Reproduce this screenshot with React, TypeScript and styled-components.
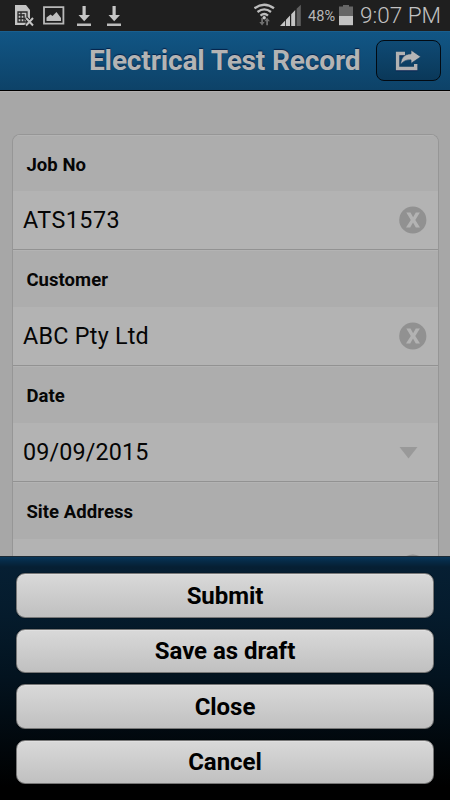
import React from 'react';
import styled, { createGlobalStyle } from 'styled-components';

const GlobalStyle = createGlobalStyle`
  * { box-sizing: border-box; }
  html, body { margin: 0; padding: 0; }
  body { font-family: Roboto, "Liberation Sans", sans-serif; background: #a7a7a7; }
  svg { display: block; flex: none; }
`;

const Screen = styled.div`
  width: 450px;
  height: 800px;
  overflow: hidden;
  display: flex;
  flex-direction: column;
  background: #a7a7a7;
`;

const StatusBar = styled.div`
  height: 31px;
  flex: none;
  display: flex;
  align-items: flex-start;
  justify-content: space-between;
  padding: 0 9px 0 14px;
  background: #1f1f1f;
`;

const StatusGroup = styled.div`
  display: flex;
  height: 31px;
`;

const Battery = styled.span`
  width: 30px;
  margin-left: 6px;
  margin-right: 1px;
  font-size: 14.6px;
  line-height: 31px;
  padding-top: 1px;
  color: #b8b8b8;
  white-space: nowrap;
`;

const Clock = styled.span`
  width: 81px;
  margin-left: 7px;
  font-size: 22.5px;
  font-weight: 300;
  line-height: 31px;
  color: #c2c2c2;
  white-space: nowrap;
`;

const Header = styled.header`
  height: 60px;
  flex: none;
  display: flex;
  align-items: center;
  justify-content: flex-end;
  padding-right: 9px;
  border-bottom: 1px solid #000;
  background: linear-gradient(#115685, #0d4268);
  box-shadow: inset 0 1px #1a5f8e, 0 1px #b2b0b0;
`;

const Title = styled.h1`
  margin: 0 15px 0 0;
  width: 272px;
  font-size: 28px;
  font-weight: 700;
  line-height: 34px;
  letter-spacing: -0.14px;
  white-space: nowrap;
  color: #b4b4b4;
  text-shadow: 0 -1px 1px #06224a;
`;

const ShareButton = styled.button`
  width: 65px;
  height: 41px;
  padding: 0;
  display: grid;
  place-items: center;
  border: 1px solid #020a12;
  border-radius: 8px;
  background: linear-gradient(#0f4a74, #0a3859);
`;

const Form = styled.main`
  flex: 1;
  min-height: 0;
  overflow: hidden;
  padding: 43px 12px 0;
`;

const Card = styled.div`
  width: 427px;
  border: 1px solid #969696;
  border-bottom: 0;
  border-radius: 8px 8px 0 0;
  overflow: hidden;
  background: #aeaeae;
`;

const Label = styled.label<{ $first: boolean }>`
  display: block;
  height: ${(p) => (p.$first ? 56 : 57)}px;
  padding-left: 13.4px;
  font-size: 18.5px;
  font-weight: 700;
  letter-spacing: 0.06px;
  line-height: 60px;
  color: #060606;
  background: #adadad;
  box-shadow: inset 0 1px #b3b3b3;
`;

const Value = styled.div`
  height: 59px;
  display: flex;
  align-items: center;
  justify-content: space-between;
  padding: 0 11px 0 10px;
  font-size: 23.3px;
  color: #050505;
  background: #b3b3b3;
  border-bottom: 1px solid #929292;
`;

const Text = styled.span<{ $spacing: number }>`
  letter-spacing: ${(p) => p.$spacing}px;
  white-space: nowrap;
`;

const Sheet = styled.section`
  height: 244px;
  flex: none;
  display: flex;
  flex-direction: column;
  gap: 11px;
  padding: 16.4px 16px 0;
  border-top: 1px solid #1c2a35;
  background: linear-gradient(#083659 0, #062b48 4px, #061f33 10px, #051b2c 60px, #03131f 120px, #000 230px);
`;

const SheetButton = styled.button`
  width: 418px;
  height: 44.5px;
  flex: none;
  padding: 0;
  font-family: inherit;
  font-size: 24px;
  font-weight: 700;
  letter-spacing: -0.04px;
  color: #000;
  border: 1px solid #777;
  border-radius: 9px;
  background: linear-gradient(#d9d9d9, #c0c0c0);
  box-shadow: inset 0 1px #e0e0e0, 0 0 1px #000;
`;

const SimIcon = () => (
  <svg width="21" height="31" viewBox="14 0 21 31">
    <path d="M15 5h11l4 5v15H15z" fill="#c4c4c4" />
    <path d="M18 12h9v10h-9zM21 12v10M24 14v8M18 15h6M18 18.5h9" fill="none" stroke="#292929" strokeWidth="1.3" />
    <path d="M26 18l7 8M33 18l-7 8" stroke="#1f1f1f" strokeWidth="4" />
    <path d="M26 18l7 7.5M33 18l-7 7.5" stroke="#c4c4c4" strokeWidth="2" />
  </svg>
);

const PictureIcon = () => (
  <svg width="22" height="31" viewBox="43 0 22 31">
    <path d="M44 7.2h19.4v16.4H44z" fill="none" stroke="#b9b9b9" strokeWidth="1.8" />
    <path d="M46.5 21v-3.5l4-3 2 1.5 4-4 4.5 6v3z" fill="#bdbdbd" />
  </svg>
);

const DownloadIcon = () => (
  <svg width="15" height="31" viewBox="0 0 15 31">
    <path d="M5.5 6h3.2v9H13l-5.8 6.3L1.5 15h4z" fill="#c6c6c6" />
    <path d="M0 23.5h14V26H0z" fill="#bcbcbc" />
  </svg>
);

const WifiIcon = () => (
  <svg width="22" height="31" viewBox="254 0 22 31">
    <path d="M254.5 8.3q9.7-7.2 19.5 0M257.5 12q6.8-5.2 13.5 0M260.5 15.6q3.8-3.2 7.5 0" fill="none" stroke="#bdbdbd" strokeWidth="2.3" />
    <circle cx="264.2" cy="17.8" r="1.7" fill="#c8c8c8" />
    <path d="M261.2 18h1.8v4h1.6l-2.5 3.5-2.8-3.5h1.9zM266.2 25.3v-4h-1.8l2.7-3.5 2.8 3.5H268v4z" fill="#707070" />
  </svg>
);

const SignalIcon = () => (
  <svg width="22" height="31" viewBox="280 0 22 31">
    <path d="M280 26l5.2-5.5V26zM286 19.7l4-4.2V26h-4zM291.2 14.3l4-4.2V26h-4z" fill="#c5c5c5" />
    <path d="M296.6 8.8l4.2-4V26h-4.2z" fill="#606060" />
  </svg>
);

const BatteryIcon = () => (
  <svg width="14" height="31" viewBox="339 0 14 31">
    <path d="M339 6.5h4V5h6v1.5h4V16h-14z" fill="#666" />
    <path d="M339 16h14v9.2h-14z" fill="#c2c2c2" />
  </svg>
);

const ShareIcon = () => (
  <svg width="27" height="22" viewBox="0 0 27 22">
    <path d="M10 3.5H2.6v15h18.1V14" fill="none" stroke="#062151" strokeWidth="3.4" transform="translate(0 1)" />
    <path d="M10 3.5H2.6v15h18.1V14" fill="none" stroke="#b2b2b2" strokeWidth="3.4" />
    <path d="M5.6 14.6C6 7.4 9.6 4 16 3.8V0l9.8 6.8-9.8 6.6v-3.5c-4.5-.2-7.1.9-10.4 4.7z" fill="#b6b6b6" stroke="#0c3b60" strokeWidth=".7" />
  </svg>
);

const ClearIcon = () => (
  <svg width="28" height="28" viewBox="0 0 28 28">
    <circle cx="13.8" cy="14" r="13.6" fill="#919191" />
    <path d="M7.3 6.5h4.2l2.6 4.8 2.7-4.8h4.1l-4.6 7.4 4.7 7.6h-4.2l-2.8-5-2.8 5H7l4.8-7.6z" fill="#b3b3b3" />
  </svg>
);

const ArrowBox = styled.div`
  padding: 1px 9px 0 0;
`;

const ArrowIcon = () => (
  <ArrowBox>
    <svg width="19" height="12" viewBox="0 0 19 12">
      <path d="M.5 0h18L9.5 11.5z" fill="#999" />
    </svg>
  </ArrowBox>
);

const fields = [
  { label: 'Job No', value: 'ATS1573', spacing: 0.5, icon: <ClearIcon /> },
  { label: 'Customer', value: 'ABC Pty Ltd', spacing: 0.25, icon: <ClearIcon /> },
  { label: 'Date', value: '09/09/2015', spacing: 0.16, icon: <ArrowIcon /> },
  { label: 'Site Address', value: '', spacing: 0, icon: <ClearIcon /> },
];

const actions = ['Submit', 'Save as draft', 'Close', 'Cancel'];

const LeftIcons = styled(StatusGroup)`
  gap: 8px;
`;

const Downloads = styled(StatusGroup)`
  gap: 15px;
  margin-left: 4px;
`;

const RightIcons = styled(StatusGroup)`
  & > svg + svg { margin-left: 4px; }
`;

export default function App() {
  return (
    <>
      <GlobalStyle />
      <Screen>
        <StatusBar>
          <LeftIcons>
            <SimIcon />
            <PictureIcon />
            <Downloads>
              <DownloadIcon />
              <DownloadIcon />
            </Downloads>
          </LeftIcons>
          <RightIcons>
            <WifiIcon />
            <SignalIcon />
            <Battery>48%</Battery>
            <BatteryIcon />
            <Clock>9:07 PM</Clock>
          </RightIcons>
        </StatusBar>
        <Header>
          <Title>Electrical Test Record</Title>
          <ShareButton aria-label="Share">
            <ShareIcon />
          </ShareButton>
        </Header>
        <Form>
          <Card>
            {fields.map((f, i) => (
              <React.Fragment key={f.label}>
                <Label $first={i === 0}>{f.label}</Label>
                <Value>
                  <Text $spacing={f.spacing}>{f.value}</Text>
                  {f.icon}
                </Value>
              </React.Fragment>
            ))}
          </Card>
        </Form>
        <Sheet>
          {actions.map((a) => (
            <SheetButton key={a}>{a}</SheetButton>
          ))}
        </Sheet>
      </Screen>
    </>
  );
}
